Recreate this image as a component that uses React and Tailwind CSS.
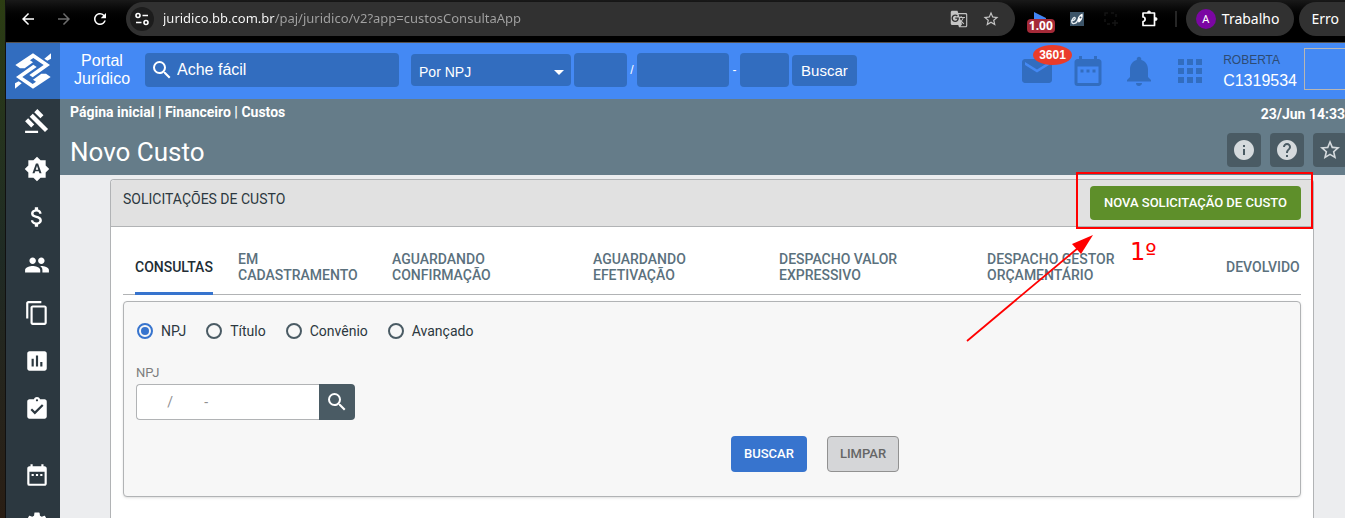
import React, { useState } from 'react';
import {
  MdApps,
  MdArrowBack,
  MdArrowDropDown,
  MdArrowForward,
  MdAssessment,
  MdAssignmentTurnedIn,
  MdAttachMoney,
  MdBrightnessAuto,
  MdContentCopy,
  MdDateRange,
  MdEmail,
  MdGTranslate,
  MdGavel,
  MdHelp,
  MdInfo,
  MdNotifications,
  MdPeople,
  MdRefresh,
  MdSearch,
  MdSettings,
  MdStarBorder,
} from 'react-icons/md';

const sideItems = [
  { label: 'Processos', icon: MdGavel },
  { label: 'Automação', icon: MdBrightnessAuto },
  { label: 'Financeiro', icon: MdAttachMoney },
  { label: 'Pessoas', icon: MdPeople },
  { label: 'Documentos', icon: MdContentCopy },
  { label: 'Relatórios', icon: MdAssessment },
  { label: 'Tarefas', icon: MdAssignmentTurnedIn },
  { label: 'Agenda', icon: MdDateRange, spaced: true },
  { label: 'Configurações', icon: MdSettings },
];

const tabs = [
  ['CONSULTAS'],
  ['EM', 'CADASTRAMENTO'],
  ['AGUARDANDO', 'CONFIRMAÇÃO'],
  ['AGUARDANDO', 'EFETIVAÇÃO'],
  ['DESPACHO VALOR', 'EXPRESSIVO'],
  ['DESPACHO GESTOR', 'ORÇAMENTÁRIO'],
  ['DEVOLVIDO'],
];

const searchModes = ['NPJ', 'Título', 'Convênio', 'Avançado'];

const Logo = () => (
  <svg viewBox="0 0 150 150" className="size-[50px]" fill="white" aria-hidden="true">
    <path d="M22 57 L75 22 L126 57 L74 94 L64 87 L107 57 L76 36 L66 43 L75 49 L50 67 L36 67 Z" />
    <path d="M22 57 L75 22 L126 57 L74 94 L64 87 L107 57 L76 36 L66 43 L75 49 L50 67 L36 67 Z" transform="rotate(180 75 75)" />
    <path d="M129 22 L129 38 L118 44 L109 38 Z" />
    <path d="M21 128 L21 112 L32 106 L41 112 Z" />
  </svg>
);

const BrowserBar = () => (
  <div className="flex h-[43px] shrink-0 items-start border-b border-[#55504c] bg-linear-to-b from-[#191919] to-black to-60% pt-0.5 font-['Noto_Sans',sans-serif] text-white">
    <div className="flex h-[34px] items-center gap-[18px] pr-[17px] pl-[13px]">
      <button aria-label="Voltar"><MdArrowBack className="size-[18px]" /></button>
      <button aria-label="Avançar"><MdArrowForward className="size-[18px] text-[#6d6d6d]" /></button>
      <button aria-label="Recarregar"><MdRefresh className="size-[18px]" /></button>
    </div>
    <div className="flex h-[34px] min-w-0 flex-1 items-center rounded-full bg-[#313131] pr-[15px] pl-1">
      <button aria-label="Informações do site" className="grid size-6 shrink-0 place-items-center rounded-full bg-[#1c1c1c]">
        <svg viewBox="0 0 14 14" className="size-3.5" fill="none" stroke="white" strokeWidth="1.6" aria-hidden="true">
          <circle cx="3" cy="3.5" r="2" />
          <path d="M7.5 3.5H13M1 10.5H6.5" />
          <circle cx="11" cy="10.5" r="2" />
        </svg>
      </button>
      <input
        aria-label="Endereço"
        defaultValue="juridico.bb.com.br/paj/juridico/v2?app=custosConsultaApp"
        className="ml-[9px] min-w-0 flex-1 bg-[linear-gradient(to_right,white_112px,#a3a3a3_112px)] bg-clip-text text-[13px] text-transparent outline-none"
      />
      <button aria-label="Traduzir"><MdGTranslate className="size-[18px] text-[#c4c4c4]" /></button>
      <button aria-label="Favoritar" className="ml-[14px]"><MdStarBorder className="size-[18px] text-[#c4c4c4]" /></button>
    </div>
    <div className="flex h-[34px] shrink-0 items-center pl-3">
      <button className="relative h-[34px] w-7">
        <svg viewBox="0 0 12 8" className="absolute top-2.5 left-[7px] h-2 w-3" fill="#4285f4" aria-hidden="true">
          <path d="M0 0 L12 6 V8 H0 Z" />
        </svg>
        <span className="absolute inset-x-0 top-[17px] rounded-sm bg-[#a52a38] text-xs/[14px] font-bold">1.00</span>
      </button>
      <button aria-label="Extensão" className="ml-[15px]">
        <svg viewBox="0 0 14 14" className="size-3.5" aria-hidden="true">
          <rect width="14" height="14" fill="#3c5468" />
          <path d="M1 9 C4 9 6 7 5 5.500 C3 4.500 0 11 3 11.500 C6 12 8 9 9 5" fill="none" stroke="#e6edf2" strokeWidth="1.300" />
          <path d="M12.500 1.500 C8 3 7 8 8.500 10.500 C11 10 13.500 6 12.500 1.500 Z" fill="white" />
          <circle cx="10.500" cy="5.500" r="1" fill="#3c5468" />
        </svg>
      </button>
      <button aria-label="Capturar" className="ml-5">
        <svg viewBox="0 0 14 14" className="size-3.5" fill="none" stroke="#151515" strokeWidth="1.500" aria-hidden="true">
          <path d="M1 4V1H4M7 1H10M12 2V5M1 7V10M3 12H6M11 8V14M8 11H14" />
        </svg>
      </button>
      <button aria-label="Extensões" className="ml-[23px]">
        <svg viewBox="0 0 18 18" className="size-[18px]" fill="none" stroke="white" strokeWidth="1.700" strokeLinejoin="round" aria-hidden="true">
          <path d="M2 3H13.500V15.500H2V11.500C4.800 11.500 4.800 7 2 7Z" />
          <path d="M6.500 2.500A1.500 1.500 0 0 1 9.500 2.500ZM14.500 7.500A1.500 1.500 0 0 1 14.500 10.500Z" fill="white" strokeWidth="1" />
        </svg>
      </button>
      <span className="ml-4 h-4 w-0.5 bg-[#262626]" />
      <button className="ml-[9px] flex h-[34px] items-center gap-1.5 rounded-full bg-[#313131] pr-[15px] pl-2.5 text-sm">
        <span className="grid size-5 place-items-center rounded-full bg-[#7b06a3] text-[11px]">A</span>
        Trabalho
      </button>
      <button className="ml-[5px] h-[34px] rounded-l-full bg-[#313131] pr-1.5 pl-3 text-sm">Erro</button>
    </div>
  </div>
);

const Header = () => (
  <header className="flex h-14 shrink-0 items-center bg-[#4489f4] pb-0.5 font-['Liberation_Sans',sans-serif] text-white">
    <a href="#inicio" aria-label="Início" className="grid h-14 w-[54px] shrink-0 place-items-center self-start bg-[#326dbf]">
      <Logo />
    </a>
    <p className="shrink-0 pr-[15px] pl-[14px] text-center text-base/[18px]">
      Portal
      <br />
      Jurídico
    </p>
    <label className="flex h-[34px] w-[254px] shrink-0 items-center gap-[3px] rounded bg-[#326dbf] pl-[5px]">
      <MdSearch className="size-6" />
      <input aria-label="Ache fácil" placeholder="Ache fácil" className="min-w-0 flex-1 text-base outline-none placeholder:text-white" />
    </label>
    <form className="ml-3 flex shrink-0 items-center text-xs" onSubmit={(e) => e.preventDefault()}>
      <div className="relative mr-[3px]">
        <select aria-label="Tipo de busca" className="h-8 w-40 appearance-none rounded bg-[#326dbf] px-2 pt-1 text-sm">
          <option>Por NPJ</option>
        </select>
        <MdArrowDropDown className="pointer-events-none absolute top-1.5 right-0 size-6" />
      </div>
      <input aria-label="Ano" className="h-[34px] w-[53px] rounded bg-[#326dbf]" />
      <span className="w-2.5 text-center">/</span>
      <input aria-label="Número" className="h-[34px] w-[92px] rounded bg-[#326dbf]" />
      <span className="w-[11px] text-center">-</span>
      <input aria-label="Variação" className="h-[34px] w-[49px] rounded bg-[#326dbf]" />
      <button className="ml-[3px] h-[31px] rounded bg-[#326dbf] px-[9px] pt-0.5 text-[15px]">Buscar</button>
    </form>
    <div className="mt-0.5 ml-auto flex shrink-0 items-center gap-[15px] text-[#326dbf]">
      <button className="relative" aria-label="Mensagens">
        <MdEmail className="size-9" />
        <span className="absolute -top-2 left-3.5 rounded-[50%] bg-[#ea3c2a] px-1.5 text-xs/[20px] font-bold text-white">3601</span>
      </button>
      <button aria-label="Agenda"><MdDateRange className="size-9" /></button>
      <button aria-label="Notificações"><MdNotifications className="size-9" /></button>
      <button aria-label="Aplicativos"><MdApps className="size-9" /></button>
      <p className="text-base/[22px] text-white">
        <span className="block text-xs/[20px] text-[#2d4b73]">ROBERTA</span>
        C1319534
      </p>
    </div>
    <div className="mb-0.5 ml-[7px] h-[42px] w-[41px] shrink-0 border border-r-0 border-[#b9b6b3]" />
  </header>
);

const Sidebar = () => (
  <nav className="flex w-[54px] shrink-0 flex-col gap-[22px] bg-[#2c3840] pt-[9px] pl-[18px] text-white">
    {sideItems.map(({ label, icon: Icon, spaced }) => (
      <a key={label} href="#menu" aria-label={label} className={spaced ? 'mt-[18px]' : ''}>
        <Icon className="size-[26px]" />
      </a>
    ))}
  </nav>
);

const toolButton = 'grid size-[34px] place-items-center rounded bg-[#4a5b64] text-[#d5dadd]';

const TitleBar = () => (
  <div className="flex h-[76px] justify-between bg-[#657c89] text-white">
    <div className="pl-2.5">
      <p className="pt-1 text-sm/[18px] font-bold">
        <a href="#inicio">Página inicial</a> | <a href="#financeiro">Financeiro</a> | <a href="#custos">Custos</a>
      </p>
      <h1 className="mt-4 text-[26px]/[30px]">Novo Custo</h1>
    </div>
    <div className="flex flex-col items-end">
      <p className="pt-1.5 text-sm/[18px] font-bold">23/Jun 14:33</p>
      <div className="mt-2.5 -mr-0.5 flex gap-[9px]">
        <button aria-label="Informações" className={toolButton}><MdInfo className="size-6" /></button>
        <button aria-label="Ajuda" className={toolButton}><MdHelp className="size-6" /></button>
        <button aria-label="Favorito" className={toolButton}><MdStarBorder className="size-6" /></button>
      </div>
    </div>
  </div>
);

// Red frame, arrow and step number drawn around the button
const StepMarker = () => (
  <div className="pointer-events-none absolute -top-[14px] -right-3 -bottom-[9px] -left-[14px] z-10 border-2 border-[#ff0000]">
    <svg viewBox="0 0 128 108" className="absolute top-[60px] -left-[112px] h-[108px] w-32" aria-hidden="true">
      <path d="M1 107 L112 14" stroke="#ff0000" strokeWidth="1.800" />
      <path d="M127 1 L106 10 L115 20 Z" fill="#ff0000" />
    </svg>
    <span className="absolute top-[62px] left-[52px] font-['DejaVu_Sans',sans-serif] text-2xl/8 text-[#ff0000]">1º</span>
  </div>
);

const SearchForm = () => {
  const [mode, setMode] = useState('NPJ');

  return (
    <form
      onSubmit={(e) => e.preventDefault()}
      className="mt-1.5 rounded border border-[#b1b3b5] bg-[#f7f7f7] px-3 pt-[21px] pb-6 shadow-sm"
    >
      <div className="flex gap-5 pl-px">
        {searchModes.map((item) => (
          <label key={item} className="flex items-center gap-2 text-sm/4 text-[#2c3840]">
            <input
              type="radio"
              name="modo"
              checked={mode === item}
              onChange={() => setMode(item)}
              className="size-4 appearance-none rounded-full border-2 border-[#4a5b64] bg-clip-content p-0.5 checked:border-[#3774ce] checked:bg-[#3774ce]"
            />
            {item}
          </label>
        ))}
      </div>
      <label htmlFor="npj" className="mt-[26px] block text-[13px]/4 text-[#7d7d7d]">NPJ</label>
      <div className="mt-[3px] flex">
        <input
          id="npj"
          placeholder="       /         -"
          className="h-9 w-[183px] rounded-l border border-r-0 border-[#b1b3b5] bg-white px-1.5 text-sm outline-none placeholder:text-[#8f8f8f]"
        />
        <button aria-label="Pesquisar NPJ" className="grid size-9 place-items-center rounded-r bg-[#4a5b64] text-white">
          <MdSearch className="size-6" />
        </button>
      </div>
      <div className="mt-4 grid grid-cols-2">
        <div className="col-start-2 flex gap-5 pl-[19px] text-[13px] font-medium">
          <button className="h-9 rounded-sm bg-[#3774ce] px-[13px] text-white">BUSCAR</button>
          <button type="reset" className="h-9 rounded-sm border border-[#919191] bg-[#d5d6d8] px-3 text-[#666]">LIMPAR</button>
        </div>
      </div>
    </form>
  );
};

const App = () => {
  const [activeTab, setActiveTab] = useState(0);

  return (
    <div className="flex h-screen overflow-hidden font-[Roboto,sans-serif]">
      <div className="w-1.5 shrink-0 border-r border-[#111] bg-linear-to-b from-[#2c3d12] via-[#1f2a24] to-[#2a1e14]" />
      <div className="flex min-w-0 flex-1 flex-col">
        <BrowserBar />
        <Header />
        <div className="flex min-h-0 flex-1">
          <Sidebar />
          <main className="flex min-w-0 flex-1 flex-col bg-[#ecedef]">
            <TitleBar />
            <section className="mt-1 mr-[31px] ml-[50px] flex-1 rounded-t border border-b-0 border-[#b1b3b5] bg-white">
              <div className="flex justify-between rounded-t border-b border-[#b1b3b5] bg-[#e1e1e1] px-3 py-1.5">
                <h2 className="mt-1 text-sm/[18px] text-[#2c3840]">SOLICITAÇÕES DE CUSTO</h2>
                <div className="relative">
                  <button className="h-[34px] rounded-sm bg-[#5e8f2a] px-[14px] text-[13px] font-medium text-white">
                    NOVA SOLICITAÇÃO DE CUSTO
                  </button>
                  <StepMarker />
                </div>
              </div>
              <div className="px-3 pt-3">
                <div
                  role="tablist"
                  className="grid h-14 grid-cols-[103fr_154fr_201fr_186fr_208fr_239fr_87fr] border-b border-[#b1b3b5]"
                >
                  {tabs.map((lines, index) => (
                    <button
                      key={lines.join(' ')}
                      role="tab"
                      aria-selected={activeTab === index}
                      onClick={() => setActiveTab(index)}
                      className="-mb-px ml-3 justify-self-start border-b-3 border-transparent pt-0.5 text-left text-sm/4 font-medium whitespace-nowrap text-[#5b717d] aria-selected:border-[#3774ce] aria-selected:text-[#222d34]"
                    >
                      {lines.map((line) => (
                        <span key={line} className="block">{line}</span>
                      ))}
                    </button>
                  ))}
                </div>
                <SearchForm />
              </div>
            </section>
          </main>
        </div>
      </div>
    </div>
  );
};

export default App;
